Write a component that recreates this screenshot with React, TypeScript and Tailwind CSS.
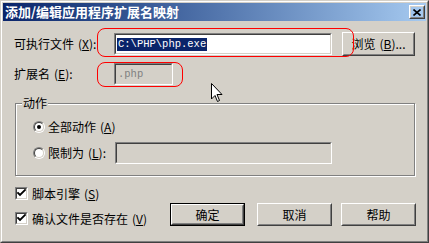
import { FunctionComponent, ReactNode } from "react";

const Sunken: FunctionComponent<{ className?: string; bg?: string; children?: ReactNode }> = ({
  className = "",
  bg = "bg-white",
  children,
}) => (
  <div className={`border border-t-[#808080] border-l-[#808080] border-b-white border-r-white ${className}`}>
    <div className={`w-full h-full border border-t-[#404040] border-l-[#404040] border-b-[#d4d0c8] border-r-[#d4d0c8] flex items-center ${bg}`}>
      {children}
    </div>
  </div>
);

const Button: FunctionComponent<{ className?: string; isDefault?: boolean; children?: ReactNode }> = ({
  className = "",
  isDefault,
  children,
}) => (
  <div className={`${isDefault ? "border border-black" : ""} ${className}`}>
    <div className="w-full h-full border border-t-white border-l-white border-b-[#404040] border-r-[#404040]">
      <div className="w-full h-full border border-t-[#d4d0c8] border-l-[#d4d0c8] border-b-[#808080] border-r-[#808080] flex items-center justify-center text-[12px] text-black">
        {children}
      </div>
    </div>
  </div>
);

const Radio: FunctionComponent<{ checked?: boolean }> = ({ checked }) => (
  <div className="w-[12px] h-[12px] rounded-full border border-t-[#808080] border-l-[#808080] border-b-white border-r-white shrink-0">
    <div className="w-full h-full rounded-full border border-t-[#404040] border-l-[#404040] border-b-[#d4d0c8] border-r-[#d4d0c8] bg-white flex items-center justify-center">
      {checked && <div className="w-[4px] h-[4px] rounded-full bg-black" />}
    </div>
  </div>
);

const Check: FunctionComponent = () => (
  <Sunken className="w-[13px] h-[13px] shrink-0">
    <svg width="9" height="9" viewBox="0 0 9 9" className="mx-auto">
      <path d="M1 4 L3 6 L8 1" stroke="#000" strokeWidth="1.8" fill="none" strokeLinecap="square" />
    </svg>
  </Sunken>
);

// mnemonic like " (X)" with the underlined access key
const Key: FunctionComponent<{ k: string }> = ({ k }) => (
  <span className="ml-[4px]">
    (<u>{k}</u>)
  </span>
);

export default function App() {
  return (
    <div className="relative w-[429px] h-[243px] bg-[#d4d0c8] font-['Noto_Sans_CJK_SC',sans-serif] text-[12px] leading-[14px] text-black overflow-hidden">
      <div className="w-full h-full border border-t-[#d4d0c8] border-l-[#d4d0c8] border-b-[#404040] border-r-[#404040]">
        <div className="w-full h-full border border-t-white border-l-white border-b-[#808080] border-r-[#808080] p-px flex flex-col">
          {/* title bar */}
          <div className="h-[18px] bg-gradient-to-r from-[#0a246a] to-[#a6caf0] flex items-center justify-between pl-[2px] pr-[1px]">
            <span className="text-white font-bold text-[13px] leading-[18px]">添加/编辑应用程序扩展名映射</span>
            <Button className="w-[16px] h-[14px]">
              <svg width="8" height="7" viewBox="0 0 8 7">
                <path d="M0.5 0.5 L7.5 6.5 M7.5 0.5 L0.5 6.5" stroke="#000" strokeWidth="1.6" />
              </svg>
            </Button>
          </div>

          <div className="flex flex-col pl-[11px]">
            {/* executable */}
            <div className="mt-[11px] h-[24px] flex items-center">
              <span className="w-[100px]">
                可执行文件<Key k="X" />:
              </span>
              <Sunken className="w-[218px] h-[22px]">
                <span className="ml-[1px] bg-[#0a246a] text-white font-['Liberation_Mono',monospace] text-[10.5px] leading-[13px] px-px">
                  C:\PHP\php.exe
                </span>
              </Sunken>
              <Button className="ml-[10px] w-[73px] h-[24px]">
                浏览<Key k="B" />...
              </Button>
            </div>

            {/* extension */}
            <div className="mt-[7px] h-[22px] flex items-center">
              <span className="w-[100px]">
                扩展名<Key k="E" />:
              </span>
              <Sunken className="w-[59px] h-[22px]" bg="bg-[#d4d0c8]">
                <span className="ml-[2px] text-[#808080] font-['Liberation_Mono',monospace] text-[10.5px]">.php</span>
              </Sunken>
            </div>

            {/* action group */}
            <div className="mt-[18px] ml-[1px] w-[400px] h-[73px] border border-[#808080] shadow-[1px_1px_0_#fff,inset_1px_1px_0_#fff] flex flex-col pl-[17px]">
              <span className="-mt-[8px] -ml-[11px] w-fit px-[1px] bg-[#d4d0c8]">动作</span>
              <div className="mt-[10px] h-[14px] flex items-center gap-[3px]">
                <Radio checked />
                <span>
                  全部动作<Key k="A" />
                </span>
              </div>
              <div className="mt-[8px] h-[22px] flex items-center">
                <Radio />
                <span className="ml-[3px] w-[67px]">
                  限制为<Key k="L" />:
                </span>
                <Sunken className="w-[217px] h-[22px]" bg="bg-[#d4d0c8]" />
              </div>
            </div>

            {/* bottom */}
            <div className="mt-[11px] flex items-start">
              <div className="w-[156px] flex flex-col gap-[12px] pl-[1px]">
                <div className="h-[13px] flex items-center gap-[4px]">
                  <Check />
                  <span>
                    脚本引擎<Key k="S" />
                  </span>
                </div>
                <div className="h-[13px] flex items-center gap-[4px]">
                  <Check />
                  <span>
                    确认文件是否存在<Key k="V" />
                  </span>
                </div>
              </div>
              <div className="mt-[16px] flex">
                <Button isDefault className="w-[75px] h-[23px]">
                  确定
                </Button>
                <Button className="ml-[12px] w-[75px] h-[23px]">取消</Button>
                <Button className="ml-[9px] w-[75px] h-[23px]">帮助</Button>
              </div>
            </div>
          </div>
        </div>
      </div>

      {/* red annotation marks */}
      <div className="absolute left-[97px] top-[28px] w-[257px] h-[29px] rounded-[8px] border border-[#ff0000]" />
      <div className="absolute left-[97px] top-[62px] w-[86px] h-[25px] rounded-[8px] border border-[#ff0000]" />

      {/* mouse cursor */}
      <svg className="absolute left-[211px] top-[83px]" width="12" height="20" viewBox="0 0 12 20">
        <path d="M0.5 0.5 L0.5 16 L4 12.5 L6.5 18.5 L8.5 17.5 L6 11.5 L11 11.5 Z" fill="#fff" stroke="#000" strokeWidth="1" />
      </svg>
    </div>
  );
}
